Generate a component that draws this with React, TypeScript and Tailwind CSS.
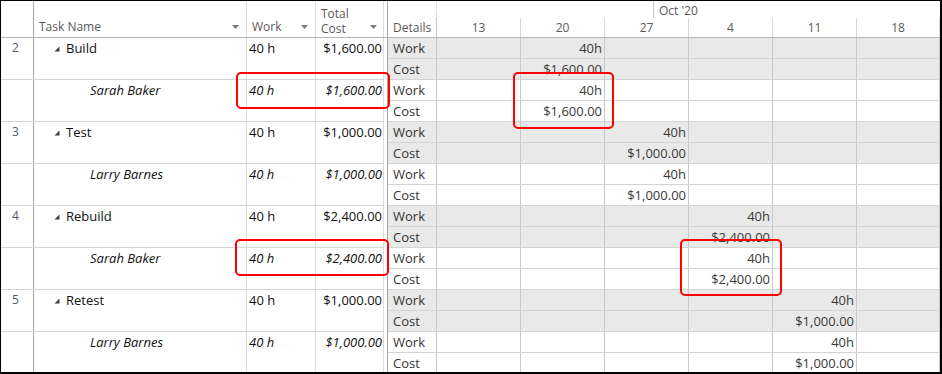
import React from "react";

type Row = {
  num?: string;
  name: string;
  work: string;
  cost: string;
  task: boolean;
  col: number;
};

const rows: Row[] = [
  { num: "2", name: "Build", work: "40 h", cost: "$1,600.00", task: true, col: 1 },
  { name: "Sarah Baker", work: "40 h", cost: "$1,600.00", task: false, col: 1 },
  { num: "3", name: "Test", work: "40 h", cost: "$1,000.00", task: true, col: 2 },
  { name: "Larry Barnes", work: "40 h", cost: "$1,000.00", task: false, col: 2 },
  { num: "4", name: "Rebuild", work: "40 h", cost: "$2,400.00", task: true, col: 3 },
  { name: "Sarah Baker", work: "40 h", cost: "$2,400.00", task: false, col: 3 },
  { num: "5", name: "Retest", work: "40 h", cost: "$1,000.00", task: true, col: 4 },
  { name: "Larry Barnes", work: "40 h", cost: "$1,000.00", task: false, col: 4 },
];

const weeks = ["13", "20", "27", "4", "11", "18"];
const weekW = ["w-[84px]", "w-[84px]", "w-[84px]", "w-[84px]", "w-[84px]", "w-[83px]"];

function DropArrow() {
  return (
    <svg width="7" height="4" viewBox="0 0 7 4" className="shrink-0">
      <polygon points="0,0 7,0 3.5,4" fill="#7a7a7a" />
    </svg>
  );
}

function Expander() {
  return (
    <svg width="6" height="6" viewBox="0 0 6 6" className="shrink-0">
      <polygon points="5.5,0.5 5.5,5.5 0.5,5.5" fill="#3c3c3c" />
    </svg>
  );
}

function Strip({ label, value, col, shaded }: { label: string; value: string; col: number; shaded: boolean }) {
  return (
    <div className={`flex h-[21px] border-b border-[#d4d4d4] ${shaded ? "bg-[#e9e9e9]" : "bg-white"}`}>
      <div className="w-[49px] shrink-0 border-r border-[#c8c8c8] pl-[5px] text-[13px] leading-[20px] text-[#333]">
        {label}
      </div>
      {weeks.map((w, i) => (
        <div
          key={w}
          className={`${weekW[i]} shrink-0 border-r border-[#c8c8c8] pr-[2px] text-right text-[13px] leading-[20px] text-[#3a3a3a]`}
        >
          {i === col ? value : ""}
        </div>
      ))}
    </div>
  );
}

export default function App() {
  return (
    <div className="relative w-[942px] h-[374px] overflow-hidden bg-white border-l border-t border-r-2 border-b-2 border-black font-['Open_Sans',sans-serif]">
      {/* header */}
      <div className="flex h-[37px] border-b border-[#b4b4b4]">
        <div className="w-[33px] shrink-0 border-r border-[#a6a6a6]" />
        <div className="w-[213px] shrink-0 border-r border-[#dcdcdc] flex items-end justify-between pl-[5px] pr-[7px] pb-[3px]">
          <span className="text-[12px] leading-[15px] text-[#5a5a5a]">Task Name</span>
          <span className="mb-[5px]"><DropArrow /></span>
        </div>
        <div className="w-[69px] shrink-0 border-r border-[#dcdcdc] flex items-end justify-between pl-[5px] pr-[7px] pb-[3px]">
          <span className="text-[12px] leading-[15px] text-[#5a5a5a]">Work</span>
          <span className="mb-[5px]"><DropArrow /></span>
        </div>
        <div className="w-[68px] shrink-0 border-r border-[#dcdcdc] flex items-end justify-between pl-[5px] pr-[6px]">
          <div className="flex flex-col text-[12px] text-[#5a5a5a]">
            <div className="h-[15px] leading-[14px]">Total</div>
            <div className="h-[15px] leading-[14px]">Cost</div>
          </div>
          <span className="mb-[8px]"><DropArrow /></span>
        </div>
        <div className="w-[4px] shrink-0 border-r border-[#a6a6a6]" />
        <div className="w-[49px] shrink-0 flex flex-col">
          <div className="h-[17px] border-r border-dotted border-[#c8c8c8]" />
          <div className="h-[19px] border-r border-[#c8c8c8] pl-[5px] text-[12px] leading-[19px] text-[#5a5a5a]">Details</div>
        </div>
        <div className="flex flex-col">
          <div className="h-[17px] flex">
            <div className="w-[216px] shrink-0" />
            <div className="h-[17px] border-l border-[#c8c8c8] pl-[5px] text-[12px] leading-[19px] text-[#5a5a5a]">Oct '20</div>
          </div>
          <div className="h-[19px] flex">
            {weeks.map((w, i) => (
              <div
                key={w}
                className={`${weekW[i]} shrink-0 border-r border-[#d8d8d8] text-center text-[12px] leading-[19px] text-[#5a5a5a]`}
              >
                {w}
              </div>
            ))}
          </div>
        </div>
      </div>

      {/* rows */}
      {rows.map((r, idx) => (
        <div key={idx} className="flex h-[42px]">
          <div className="flex w-[383px] shrink-0 border-b border-[#d4d4d4] text-[#111]">
            <div className="w-[33px] shrink-0 border-r border-[#a6a6a6] pl-[11px] text-[12px] leading-[19px] text-[#4e5d6c]">
              {r.num ?? ""}
            </div>
            <div className="w-[213px] shrink-0 border-r border-[#dcdcdc]">
              {r.task ? (
                <div className="flex items-center h-[21px] pl-[20px]">
                  <Expander />
                  <span className="ml-[6px] text-[13px] leading-[21px]">{r.name}</span>
                </div>
              ) : (
                <div className="h-[21px] pl-[56px] text-[13px] leading-[21px] italic">{r.name}</div>
              )}
            </div>
            <div className={`w-[69px] shrink-0 border-r border-[#dcdcdc] pl-[2px] text-[13px] leading-[21px] ${r.task ? "" : "italic"}`}>
              {r.work}
            </div>
            <div className={`w-[68px] shrink-0 border-r border-[#dcdcdc] pr-[1px] text-right text-[13px] leading-[21px] ${r.task ? "" : "italic"}`}>
              {r.cost}
            </div>
          </div>
          <div className="w-[4px] shrink-0 border-r border-[#a6a6a6]" />
          <div className="flex flex-col">
            <Strip label="Work" value="40h" col={r.col} shaded={r.task} />
            <Strip label="Cost" value={r.cost} col={r.col} shaded={r.task} />
          </div>
        </div>
      ))}

      {/* red annotation boxes */}
      <div className="absolute left-[235px] top-[71px] w-[154px] h-[37px] border-2 border-[#f00] rounded-[5px] pointer-events-none" />
      <div className="absolute left-[512px] top-[71px] w-[101px] h-[57px] border-2 border-[#f00] rounded-[5px] pointer-events-none" />
      <div className="absolute left-[234px] top-[238px] w-[154px] h-[37px] border-2 border-[#f00] rounded-[5px] pointer-events-none" />
      <div className="absolute left-[679px] top-[238px] w-[102px] h-[57px] border-2 border-[#f00] rounded-[5px] pointer-events-none" />
    </div>
  );
}
